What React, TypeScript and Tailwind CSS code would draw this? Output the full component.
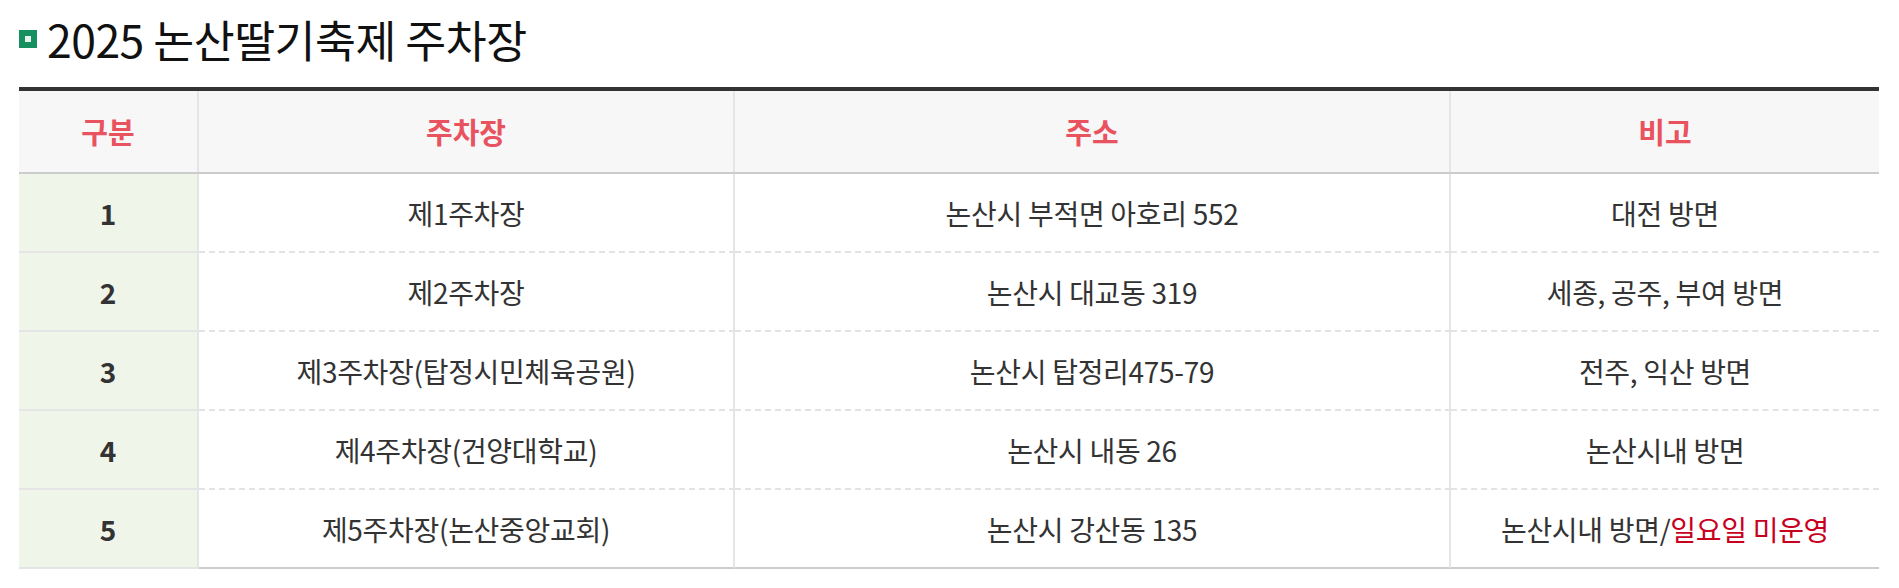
const rows: { no: number; lot: string; addr: string; note: string; warn?: string }[] = [
  { no: 1, lot: "제1주차장", addr: "논산시 부적면 아호리 552", note: "대전 방면" },
  { no: 2, lot: "제2주차장", addr: "논산시 대교동 319", note: "세종, 공주, 부여 방면" },
  { no: 3, lot: "제3주차장(탑정시민체육공원)", addr: "논산시 탑정리475-79", note: "전주, 익산 방면" },
  { no: 4, lot: "제4주차장(건양대학교)", addr: "논산시 내동 26", note: "논산시내 방면" },
  { no: 5, lot: "제5주차장(논산중앙교회)", addr: "논산시 강산동 135", note: "논산시내 방면/", warn: "일요일 미운영" },
];

const font = { fontFamily: '"Noto Sans CJK KR", "Noto Sans", sans-serif' };

export default function App() {
  return (
    <div className="bg-white min-h-[588px] pl-[19px] pt-[14px]" style={font}>
      <h2 className="flex items-center h-[50px] text-[44.5px] leading-none font-normal tracking-[-0.5px] text-[#111]">
        <span className="w-[18px] h-[18px] bg-[#17905f] flex items-center justify-center mr-[10px]">
          <span className="w-[6px] h-[6px] bg-[#e8f3ee]" />
        </span>
        2025 논산딸기축제 주차장
      </h2>

      <div className="mt-[23px] w-[1860px] border-t-4 border-[#333]">
        <div className="grid grid-cols-[180px_536px_716px_428px] h-[83px] bg-[#f7f7f7] border-b-2 border-[#ccc]">
          {["구분", "주차장", "주소", "비고"].map((h, i) => (
            <div
              key={h}
              className={`flex items-center justify-center text-[29px] font-bold text-[#e9525f] ${
                i < 3 ? "border-r-2 border-[#e5e5e5]" : ""
              }`}
            >
              {h}
            </div>
          ))}
        </div>

        {rows.map((r, idx) => {
          const last = idx === rows.length - 1;
          const cell = `flex items-center justify-center h-[79px] text-[28px] tracking-[-0.3px] text-[#333] ${
            last ? "border-b-2 border-solid border-[#ccc]" : "border-b-2 border-dashed border-[#e3e3e3]"
          }`;
          return (
            <div key={r.no} className="grid grid-cols-[180px_536px_716px_428px]">
              <div className="flex items-center justify-center h-[79px] bg-[#f0f5ea] border-r-2 border-b-2 border-[#e5e5e5] text-[28px] font-bold text-[#333]">
                {r.no}
              </div>
              <div className={`${cell} border-r-2 [border-right-style:solid] [border-right-color:#e5e5e5]`}>{r.lot}</div>
              <div className={`${cell} border-r-2 [border-right-style:solid] [border-right-color:#e5e5e5]`}>{r.addr}</div>
              <div className={cell}>
                {r.note}
                {r.warn && <span className="text-[#c8001e]">{r.warn}</span>}
              </div>
            </div>
          );
        })}
      </div>
    </div>
  );
}
